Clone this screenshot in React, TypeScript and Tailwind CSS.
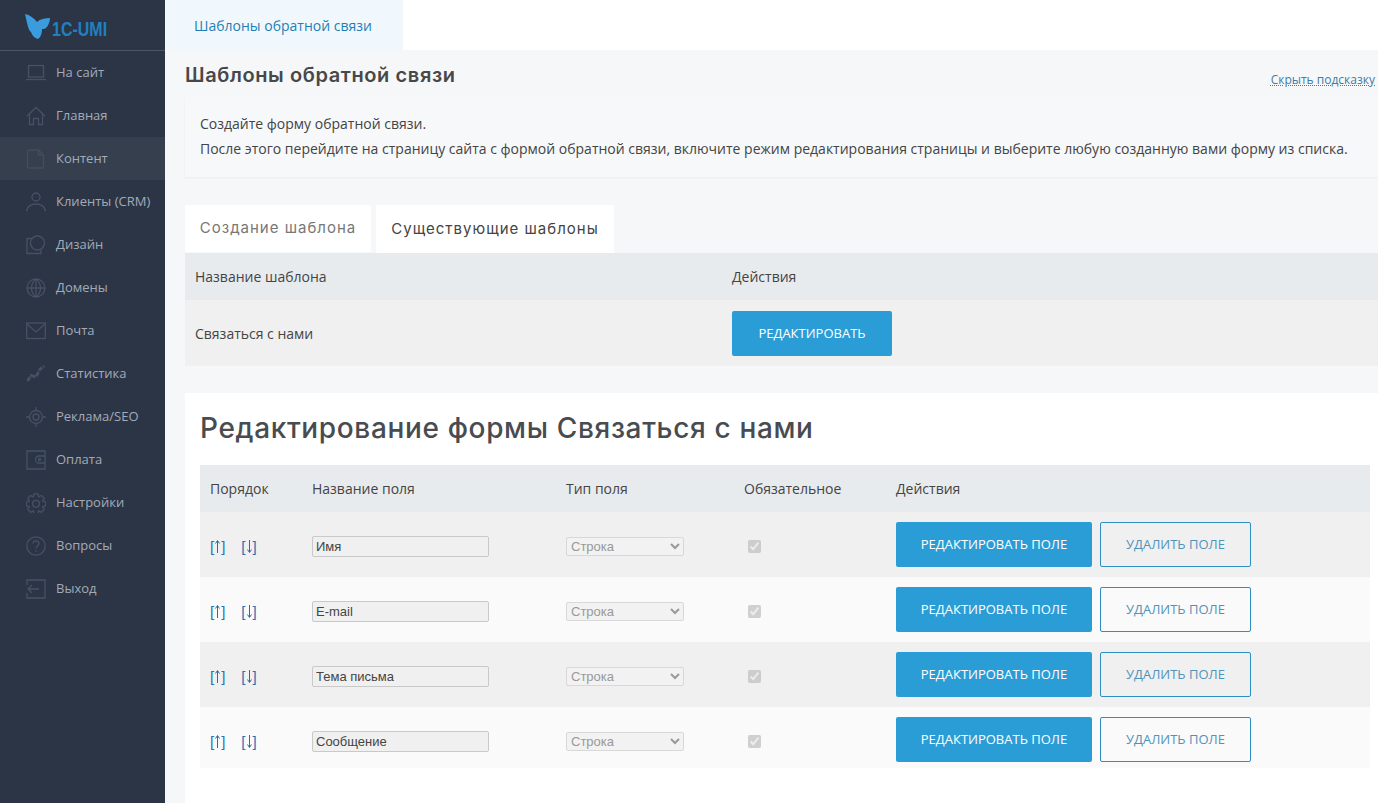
import React from "react";

const Icon = ({ children }: { children: React.ReactNode }) => (
  <svg viewBox="0 0 20 20" fill="none" stroke="#465164" strokeWidth="1.3" className="w-[20px] h-[20px] shrink-0">{children}</svg>
);

const icons: Record<string, React.ReactNode> = {
  site: <Icon><rect x="2.5" y="2.5" width="15" height="11.5" /><path d="M0 16.5h20" /></Icon>,
  home: <Icon><path d="M1 10 10 1.5l9 8.5" /><path d="M3.5 8V18.5h4v-6h5v6h4V8" /></Icon>,
  content: <Icon><path d="M1.5 2.5A1.5 1.5 0 0 1 3 1h9.5L17.5 6v11.5A1.5 1.5 0 0 1 16 19H3a1.5 1.5 0 0 1-1.5-1.5z" stroke="#434e5f" /><path d="M12.5 1v5h5" stroke="#434e5f" /></Icon>,
  crm: <Icon><circle cx="10" cy="5" r="4" /><path d="M0.5 19c1-5 4.5-7 9.5-7s8.5 2 9.5 7" /></Icon>,
  design: <Icon><circle cx="11.5" cy="8" r="7" /><path d="M6 3.5H1v15h14v-4" /></Icon>,
  domains: <Icon><circle cx="10" cy="10" r="9" /><path d="M1 10h18M10 1v18" /><path d="M10 1c-6 5-6 13 0 18M10 1c6 5 6 13 0 18" /></Icon>,
  mail: <Icon><rect x="0.7" y="2" width="18.6" height="15.5" /><path d="M1 3l9 8 9-8" /></Icon>,
  stats: <Icon><path d="M1.5 17l3.500-5.500 5 1.500 4-8 4.500-3" strokeWidth="2.800" strokeDasharray="5 1.200" /></Icon>,
  seo: <Icon><circle cx="10" cy="10" r="6.500" /><circle cx="10" cy="10" r="3" /><path d="M10 0v3.500M10 16.500V20M0 10h3.500M16.500 10H20" /></Icon>,
  pay: <Icon><path d="M19 1H1v18h18z" /><path d="M19 6h-6a3.500 3.500 0 0 0 0 7h6" /><circle cx="13.500" cy="9.500" r="1" /></Icon>,
  settings: <Icon><path d="M8 0.8h4l.7 3 2.7-1.3 2.8 2.8-1.5 2.6 2.9 1v4l-2.9 1 1.5 2.6-2.8 2.8-2.7-1.3-.7 2.6H8l-.7-2.6-2.7 1.3-2.8-2.8 1.5-2.6-2.9-1V9l2.9-1-1.5-2.6 2.8-2.8 2.7 1.3z" /><circle cx="10" cy="10.8" r="3.4" /></Icon>,
  help: <Icon><circle cx="10" cy="10" r="9.2" /><path d="M7 7.5C7 5.5 8.5 4.8 10 4.8s3 1 3 2.8c0 2.5-3 2.5-3 5" /><path d="M10 14.5v1.5" /></Icon>,
  exit: <Icon><path d="M1 6V1h18v18H1v-5" /><path d="M13 10H2M6 6l-4 4 4 4" /></Icon>,
};

const nav = [
  ["На сайт", "site"], ["Главная", "home"], ["Контент", "content"], ["Клиенты (CRM)", "crm"],
  ["Дизайн", "design"], ["Домены", "domains"], ["Почта", "mail"], ["Статистика", "stats"],
  ["Реклама/SEO", "seo"], ["Оплата", "pay"], ["Настройки", "settings"], ["Вопросы", "help"], ["Выход", "exit"],
];

const fields = ["Имя", "E-mail", "Тема письма", "Сообщение"];
const heading = { fontFamily: "Inter, 'Noto Sans', sans-serif" };

const Arrow = ({ down }: { down?: boolean }) => (
  <span className="inline-flex items-center text-[15px] leading-none text-[#2a72b5] font-['Liberation_Sans',sans-serif]">
    [
    <svg viewBox="0 0 7 13" className="w-[7px] h-[13px]" fill="none" stroke="#2b6d9c" strokeWidth="1">
      {down ? <path d="M3.500 0v12M1.500 9.500l2 3 2-3" /> : <path d="M3.500 13V1M1.500 3.500l2-3 2 3" />}
    </svg>
    ]
  </span>
);

export default function App() {
  return (
    <div className="flex h-screen overflow-hidden bg-[#f5f7f9] text-[#444] font-['Open_Sans',sans-serif]">
      <aside className="w-[165px] shrink-0 bg-[#2c3545]">
        <div className="h-[51px] flex items-center pl-[25px] border-b border-[#4d5766]">
          <svg viewBox="0 0 25 25" className="w-[25px] h-[25px] mt-[3px] shrink-0">
            <path d="M0 0C5 1 9 4 12 8C15 5 20 4 25 4C25 8 23 12 21 14C20 15 18 15 17 15C17 19 16 23 13 25C9 24 7 21 6 18C3 16 2 8 0 0z" fill="#3a9cdc" />
          </svg>
          <span className="text-[20px] leading-none font-bold text-[#1f80c2] font-['Liberation_Sans',sans-serif] [transform:scaleX(0.8)] origin-left ml-[2px] mt-[7px] whitespace-nowrap">1C-UMI</span>
        </div>
        <nav>
          {nav.map(([label, icon]) => (
            <div key={label} className={`h-[43px] flex items-center pl-[26px] gap-[10px] text-[13px] text-[#a3abb8] ${label === "Контент" ? "bg-[#353f4e]" : ""}`}>
              {icons[icon]}
              <span className="whitespace-nowrap">{label}</span>
            </div>
          ))}
        </nav>
      </aside>

      <main className="flex-1 min-w-0 flex flex-col">
        <div className="h-[50px] shrink-0 bg-white flex">
          <div className="w-[238px] bg-[#f0f8fd] flex items-center pl-[29px] text-[14px] text-[#1f7fb5]">Шаблоны обратной связи</div>
        </div>

        <div className="pl-[20px] flex-1 min-h-0 flex flex-col">
          <div className="h-[46px] shrink-0 flex items-center justify-between">
            <h1 className="text-[20px] font-semibold text-[#484848] tracking-[0.6px] mt-[4px]" style={heading}>Шаблоны обратной связи</h1>
            <a className="text-[12px] text-[#3d7ca8] underline decoration-dotted mt-[14px] mr-[3px] whitespace-nowrap">Скрыть подсказку</a>
          </div>

          <div className="h-[81px] shrink-0 bg-[#f6f8fa] shadow-[0_1px_2px_rgba(0,0,0,0.05)] pl-[15px] pt-[17px] text-[14px] leading-[22px] text-[#444] whitespace-nowrap overflow-hidden">
            <p>Создайте форму обратной связи.</p>
            <p className="mt-[3px]">После этого перейдите на страницу сайта с формой обратной связи, включите режим редактирования страницы и выберите любую созданную вами форму из списка.</p>
          </div>

          <div className="flex gap-[5px] mt-[28px] h-[48px] shrink-0">
            <div className="w-[186px] h-[47px] bg-white rounded-[2px] flex items-center justify-center text-[15px] text-[#777] tracking-[1px]" style={heading}>Создание шаблона</div>
            <div className="w-[238px] bg-white rounded-[2px] flex items-center justify-center text-[15px] text-[#444] tracking-[1px]" style={heading}>Существующие шаблоны</div>
          </div>

          <div className="grid grid-cols-[537px_1fr] h-[47px] shrink-0 items-center bg-[#e8ebee] pl-[10px] text-[14px]">
            <span>Название шаблона</span>
            <span>Действия</span>
          </div>
          <div className="grid grid-cols-[537px_1fr] h-[66px] shrink-0 items-center bg-[#f0f0f0] pl-[10px] text-[14px]">
            <span>Связаться с нами</span>
            <button className="w-[160px] h-[45px] pt-[1px] bg-[#2b9dd6] text-white text-[13px] rounded-[2px] uppercase">Редактировать</button>
          </div>

          <section className="mt-[27px] flex-1 bg-white pl-[15px] pr-[8px]">
            <h2 className="h-[72px] pb-[2px] flex items-center text-[28px] font-medium text-[#484c50] tracking-[0.65px] whitespace-nowrap" style={heading}>Редактирование формы Связаться с нами</h2>
            <div className="grid grid-cols-[102px_254px_178px_152px_1fr] h-[47px] items-center pl-[10px] bg-[#e8ebee] text-[14px]">
              <span>Порядок</span>
              <span>Название поля</span>
              <span>Тип поля</span>
              <span>Обязательное</span>
              <span>Действия</span>
            </div>
            {fields.map((f, i) => (
              <div key={f} className={`grid grid-cols-[102px_254px_178px_152px_1fr] items-center pl-[10px] ${i === 3 ? "h-[61px] pt-[4px]" : "h-[65px]"} ${i % 2 === 0 ? "bg-[#f0f0f0]" : "bg-[#fafafa]"}`}>
                <div className="flex gap-[16px] mt-[3px]">
                  <Arrow />
                  <Arrow down />
                </div>
                <div className="mt-[4px]">
                  <input readOnly value={f} className="block w-[177px] h-[21px] px-[3px] bg-[#f0f0f0] border border-[#c9c9c9] rounded-[2px] text-[13px] text-[#444] font-['Liberation_Sans',sans-serif] outline-none" />
                </div>
                <div className="mt-[4px]">
                  <select disabled className="block w-[118px] h-[19px] bg-[#f2f2f2] border border-[#d8d8d8] rounded-[2px] text-[13px] text-[#999] font-['Liberation_Sans',sans-serif]">
                    <option>Строка</option>
                  </select>
                </div>
                <div className="mt-[4px]">
                  <input type="checkbox" checked disabled readOnly className="block w-[13px] h-[13px] ml-[4px]" />
                </div>
                <div className="flex gap-[8px]">
                  <button className="w-[196px] h-[45px] bg-[#2b9dd6] text-white text-[13px] rounded-[2px] uppercase">Редактировать поле</button>
                  <button className="w-[151px] h-[45px] border border-[#2d8ec4] text-[#4f93b8] text-[13px] rounded-[2px] uppercase">Удалить поле</button>
                </div>
              </div>
            ))}
          </section>
        </div>
      </main>
    </div>
  );
}
